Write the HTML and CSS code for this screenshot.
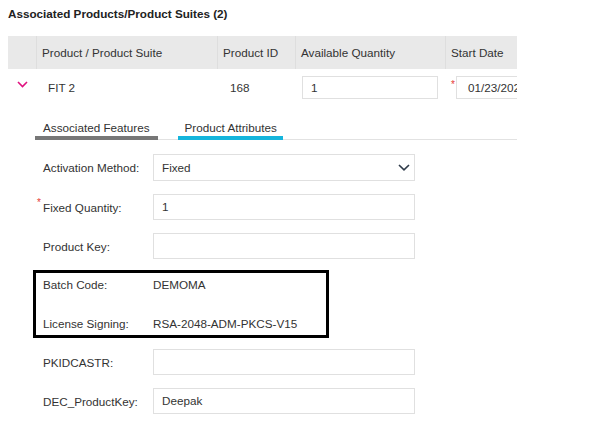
FILE: index.html
```html
<!DOCTYPE html>
<html>
<head>
<meta charset="utf-8">
<link rel="stylesheet" href="styles.css">
</head>
<body>
<div class="page">
  <h2 class="title">Associated Products/Product Suites (2)</h2>
  <div class="grid">
    <div class="thead">
      <div class="th"></div>
      <div class="th">Product / Product Suite</div>
      <div class="th">Product ID</div>
      <div class="th">Available Quantity</div>
      <div class="th">Start Date</div>
    </div>
    <div class="trow">
      <div class="td td-toggle">
        <svg class="chev-pink" width="11" height="7" viewBox="0 0 11 7"><path d="M1 1 L5.5 5.5 L10 1" fill="none" stroke="#e0117f" stroke-width="1.6"/></svg>
      </div>
      <div class="td td-name">FIT 2</div>
      <div class="td td-id">168</div>
      <div class="td td-qty"><div class="field field-qty">1</div></div>
      <div class="td td-date"><span class="req req-inline">*</span><div class="field field-date">01/23/2023</div></div>
    </div>
  </div>

  <div class="tabs">
    <div class="tab tab-gray">Associated Features</div>
    <div class="tab tab-blue">Product Attributes</div>
  </div>

  <div class="form">
    <div class="frow">
      <div class="label">Activation Method:</div>
      <div class="control select"><span>Fixed</span>
        <svg width="12" height="7" viewBox="0 0 12 7"><path d="M1 1 L6 5.8 L11 1" fill="none" stroke="#2f3b4a" stroke-width="1.6"/></svg>
      </div>
    </div>
    <div class="frow">
      <div class="label"><span class="req req-label">*</span>Fixed Quantity:</div>
      <div class="control">1</div>
    </div>
    <div class="frow">
      <div class="label">Product Key:</div>
      <div class="control"></div>
    </div>
    <div class="box">
      <div class="brow">
        <div class="label">Batch Code:</div>
        <div class="value">DEMOMA</div>
      </div>
      <div class="brow">
        <div class="label">License Signing:</div>
        <div class="value">RSA-2048-ADM-PKCS-V15</div>
      </div>
    </div>
    <div class="frow after-box">
      <div class="label">PKIDCASTR:</div>
      <div class="control"></div>
    </div>
    <div class="frow last">
      <div class="label">DEC_ProductKey:</div>
      <div class="control">Deepak</div>
    </div>
  </div>
</div>
</body>
</html>
```
FILE: styles.css
```css
html, body {
  margin: 0;
  padding: 0;
  background: #ffffff;
}
body {
  font-family: "Liberation Sans", Arial, sans-serif;
  font-size: 11.7px;
  color: #333333;
}
.page {
  width: 509px;
  padding-left: 8px;
  overflow: hidden;
}
.title {
  margin: 6px 0 14px 0;
  font-size: 11.7px;
  line-height: 16px;
  font-weight: bold;
  color: #222222;
}
.thead, .trow {
  display: grid;
  grid-template-columns: 28px 181px 78px 150px 72px;
}
.thead {
  background: #e9e9e9;
  height: 33px;
}
.th {
  line-height: 33px;
  padding-left: 5px;
  border-left: 1px solid #dedede;
  white-space: nowrap;
  overflow: hidden;
}
.th:first-child {
  border-left: none;
}
.trow {
  height: 41px;
}
.td {
  display: flex;
  align-items: flex-start;
  padding-top: 7px;
  box-sizing: border-box;
  white-space: nowrap;
  overflow: hidden;
}
.td-toggle {
  padding-left: 9px;
  padding-top: 12px;
}
.td-name {
  padding-left: 12px;
  line-height: 23px;
}
.td-id {
  padding-left: 13px;
  line-height: 23px;
}
.td-qty {
  padding-left: 7px;
}
.td-date {
  padding-left: 6px;
  overflow: hidden;
}
.field {
  height: 23px;
  line-height: 21px;
  box-sizing: border-box;
  border: 1px solid #e0e0e0;
  background: #fff;
  white-space: nowrap;
  overflow: hidden;
}
.field-qty {
  width: 136px;
  padding-left: 8px;
}
.field-date {
  width: 100px;
  flex-shrink: 0;
  padding-left: 11px;
  margin-left: 1px;
}
.req {
  color: #e53935;
  font-size: 10px;
}
.req-inline {
  width: 5px;
  line-height: 12px;
  margin-top: 3px;
}
.tabs {
  display: flex;
  gap: 20px;
  margin-left: 27px;
  border-bottom: 1px solid #e2e2e2;
  height: 30px;
  box-sizing: border-box;
  align-items: flex-end;
}
.tab {
  padding: 0 8px;
  line-height: 16px;
  margin-bottom: -1px;
  border-bottom: 4px solid transparent;
  color: #333;
}
.tab-gray {
  border-bottom-color: #777777;
}
.tab-blue {
  padding: 0 6px 0 7px;
  border-bottom-color: #15b5dc;
}
.form {
  margin-top: 14px;
}
.frow {
  display: flex;
  align-items: center;
  margin-left: 35px;
  margin-bottom: 13px;
}
.label {
  width: 110px;
  flex-shrink: 0;
  position: relative;
  white-space: nowrap;
}
.req-label {
  position: absolute;
  left: -6px;
  top: -4px;
}
.control {
  width: 262px;
  height: 26px;
  box-sizing: border-box;
  border: 1px solid #e0e0e0;
  padding-left: 8px;
  line-height: 24px;
  background: #fff;
}
.select {
  height: 27px;
  line-height: 25px;
  display: flex;
  align-items: center;
  justify-content: space-between;
  padding-right: 4px;
}
.box {
  margin-left: 25px;
  width: 296px;
  height: 68px;
  box-sizing: border-box;
  border: 3px solid #000;
  padding: 4px 0 0 7px;
  margin-top: -2px;
}
.brow {
  display: flex;
  line-height: 16px;
}
.brow + .brow {
  margin-top: 23px;
}
.after-box {
  margin-top: 11px;
}
.last {
  margin-top: 1px;
}
```
